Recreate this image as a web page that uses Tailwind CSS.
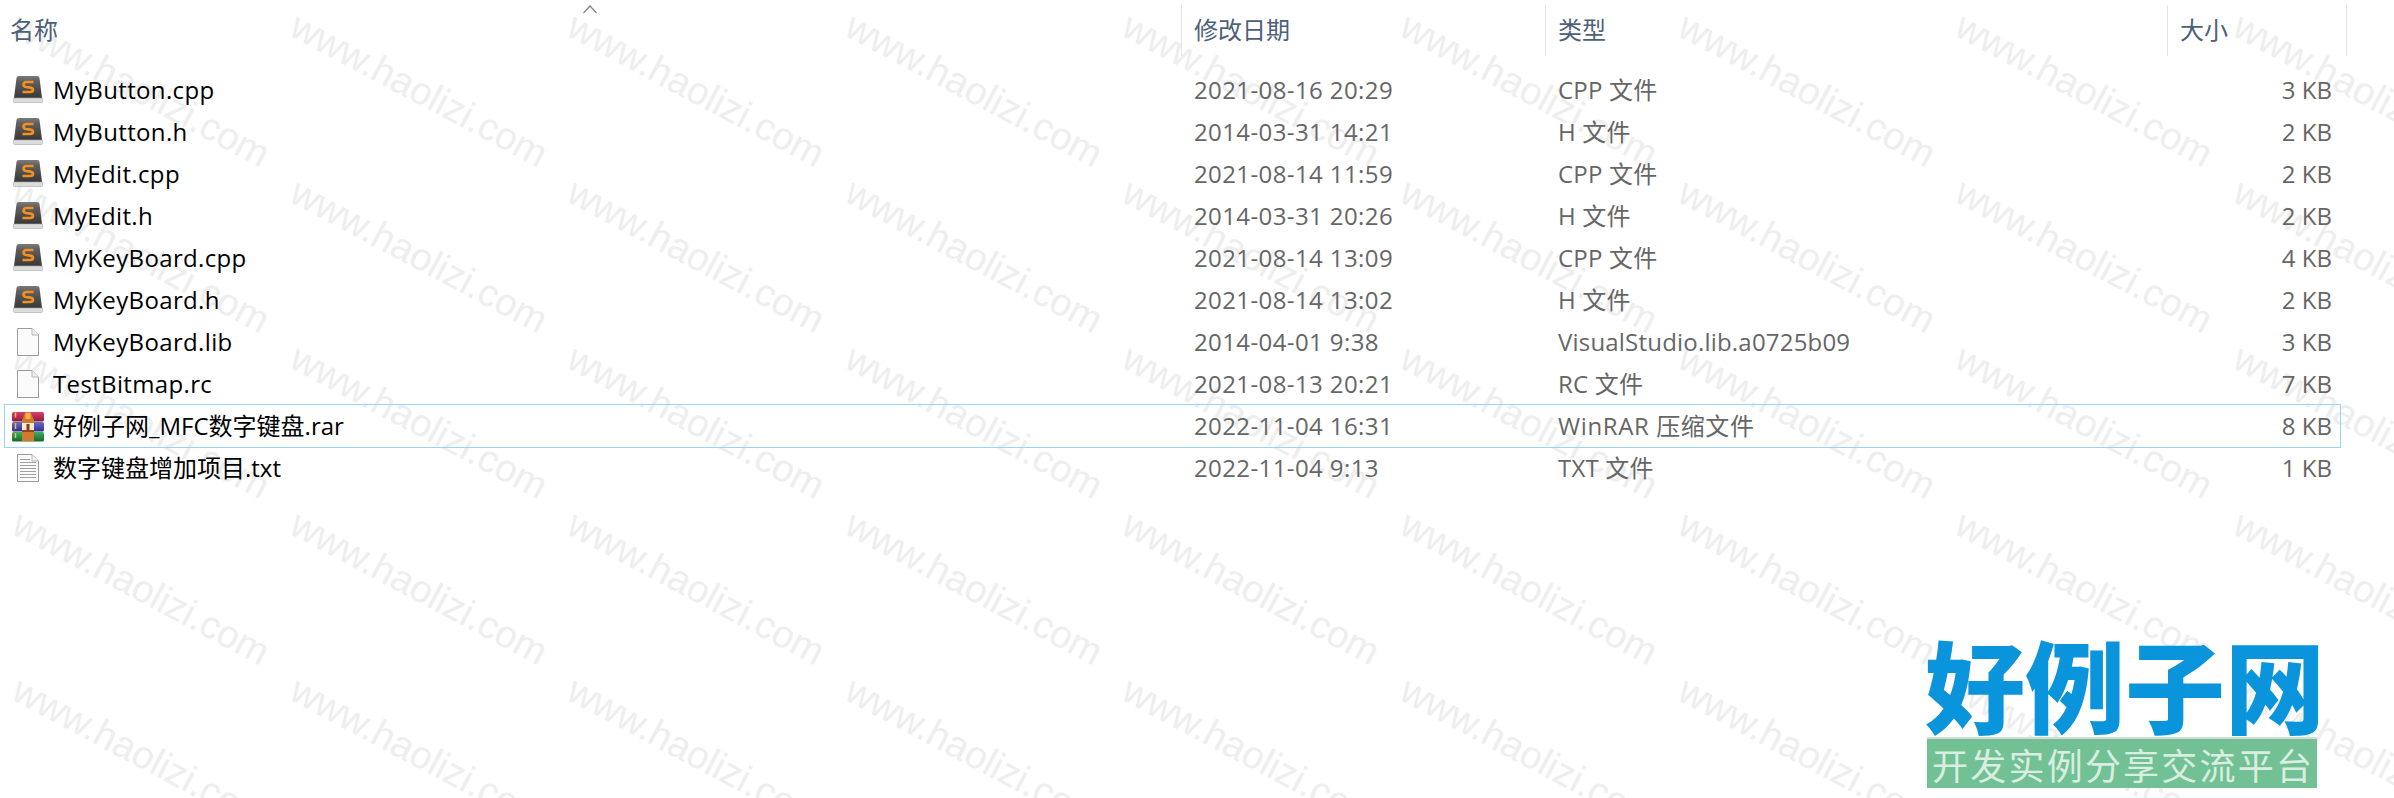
<!DOCTYPE html>
<html lang="zh">
<head>
    <meta charset="UTF-8">
    <title>文件列表</title>
    <script src="https://cdn.jsdelivr.net/npm/@tailwindcss/browser@4"></script>
</head>
<body class="bg-white">
    <svg class="absolute w-0 h-0">
        <defs>
            <linearGradient id="st" x1="0" y1="0" x2="0" y2="1"><stop offset="0" stop-color="#7c7c7c"/><stop offset=".25" stop-color="#5e5e5e"/><stop offset="1" stop-color="#383838"/></linearGradient>
            <linearGradient id="r1" x1="0" y1="0" x2="0" y2="1"><stop offset="0" stop-color="#d8406a"/><stop offset="1" stop-color="#8d1c3c"/></linearGradient>
            <linearGradient id="r2" x1="0" y1="0" x2="0" y2="1"><stop offset="0" stop-color="#6a6cc8"/><stop offset="1" stop-color="#2f2f8c"/></linearGradient>
            <linearGradient id="r3" x1="0" y1="0" x2="0" y2="1"><stop offset="0" stop-color="#3fae62"/><stop offset="1" stop-color="#14692f"/></linearGradient>
            <symbol id="sublime" viewBox="0 0 30 28">
                <path d="M3.5 2Q3.5 0 6 0H24Q26.5 0 26.5 2L29 22H1Z" fill="url(#st)"/>
                <path d="M.5 22H29.5V25.5Q29.5 26.5 28.5 26.5H1.5Q.5 26.5 .5 25.5Z" fill="#dcdcdc" stroke="#a8a8a8" stroke-width=".6"/>
                <path d="M20.5 6H13.5Q10.5 6 10.5 8.5Q10.5 10.5 13 11L17.5 11.6Q20 12 20 14Q20 16 17 16H9.5" fill="none" stroke="#f5901f" stroke-width="2.6"/>
            </symbol>
            <symbol id="blank" viewBox="0 0 22 28">
                <path d="M.5.5H15L21.5 7V27.5H.5Z" fill="#fbfbfb" stroke="#9a9a9a"/>
                <path d="M15 .5V7H21.5" fill="#f0f0f0" stroke="#b5b5b5"/>
            </symbol>
            <symbol id="text" viewBox="0 0 22 28">
                <path d="M.5.5H15L21.5 7V27.5H.5Z" fill="#fbfbfb" stroke="#9a9a9a"/>
                <path d="M15 .5V7H21.5" fill="#f0f0f0" stroke="#b5b5b5"/>
                <path d="M3 5.5H13M3 8.5H19M3 11.5H19M3 14.5H19M3 17.5H19M3 20.5H19M3 23.5H19" stroke="#a0a0a0"/>
            </symbol>
            <symbol id="rar" viewBox="0 0 32 31">
                <rect x="0" y="1" width="32" height="9.5" rx="1.5" fill="url(#r1)"/>
                <rect x="0" y="11" width="32" height="9.5" rx="1.5" fill="url(#r2)"/>
                <rect x="0" y="21" width="32" height="9.5" rx="1.5" fill="url(#r3)"/>
                <path d="M3.5 1.5V6.5M3.5 12V18M3.5 22V27" stroke="#f0c040" stroke-width="1.5"/>
                <path d="M10 9L13.5 1H18.5L22 9V30H10Z" fill="#d17a2c"/>
                <rect x="13.5" y="2" width="5" height="6" fill="#f3b048"/>
                <rect x="10" y="12" width="12" height="7" fill="#f7ead6"/>
                <rect x="14.5" y="13" width="3" height="6" fill="#8a3d12"/>
                <rect x="10" y="19" width="12" height="2" fill="#8a4a1a"/>
            </symbol>
        </defs>
    </svg>

    <div class="relative h-[798px] overflow-hidden font-['Open_Sans','Noto_Sans_CJK_SC',sans-serif]">
        <div id="watermark" class="absolute inset-0"></div>

        <div class="relative">
            <div class="relative flex h-[69px] text-[24px] text-[#4c607a]">
                <div class="w-[1181px] pl-[10px] pt-[15px] leading-[30px]">名称</div>
                <div class="w-[364px] mt-[5px] h-[51px] border-l border-[#e3e5e7] pl-[12px] pt-[10px] leading-[30px]">修改日期</div>
                <div class="w-[622px] mt-[5px] h-[51px] border-l border-[#e3e5e7] pl-[12px] pt-[10px] leading-[30px]">类型</div>
                <div class="w-[180px] mt-[5px] h-[51px] border-x border-[#e3e5e7] pl-[12px] pt-[10px] leading-[30px]">大小</div>
                <svg class="absolute left-[583px] top-[5px] w-[14px] h-[9px]" viewBox="0 0 14 9" fill="none" stroke="#808080" stroke-width="1.2"><path d="M.5 8L7 1L13.5 8"/></svg>
            </div>

            <div id="rows" class="text-[24px] leading-[42px]">
                <div class="flex h-[42px]">
                    <div class="w-[53px] flex items-center pl-[13px]"><svg class="w-[30px] h-[28px]"><use href="#sublime"/></svg></div>
                    <div class="w-[1141px] text-black tracking-[0.35px]">MyButton.cpp</div>
                    <div class="w-[364px] text-[#666] tracking-[0.4px]">2021-08-16 20:29</div>
                    <div class="w-[622px] text-[#666] whitespace-nowrap tracking-[0.2px]">CPP 文件</div>
                    <div class="w-[152px] text-right text-[#666]">3 KB</div>
                </div>
                <div class="flex h-[42px]">
                    <div class="w-[53px] flex items-center pl-[13px]"><svg class="w-[30px] h-[28px]"><use href="#sublime"/></svg></div>
                    <div class="w-[1141px] text-black tracking-[0.35px]">MyButton.h</div>
                    <div class="w-[364px] text-[#666] tracking-[0.4px]">2014-03-31 14:21</div>
                    <div class="w-[622px] text-[#666] whitespace-nowrap tracking-[0.2px]">H 文件</div>
                    <div class="w-[152px] text-right text-[#666]">2 KB</div>
                </div>
                <div class="flex h-[42px]">
                    <div class="w-[53px] flex items-center pl-[13px]"><svg class="w-[30px] h-[28px]"><use href="#sublime"/></svg></div>
                    <div class="w-[1141px] text-black tracking-[0.35px]">MyEdit.cpp</div>
                    <div class="w-[364px] text-[#666] tracking-[0.4px]">2021-08-14 11:59</div>
                    <div class="w-[622px] text-[#666] whitespace-nowrap tracking-[0.2px]">CPP 文件</div>
                    <div class="w-[152px] text-right text-[#666]">2 KB</div>
                </div>
                <div class="flex h-[42px]">
                    <div class="w-[53px] flex items-center pl-[13px]"><svg class="w-[30px] h-[28px]"><use href="#sublime"/></svg></div>
                    <div class="w-[1141px] text-black tracking-[0.35px]">MyEdit.h</div>
                    <div class="w-[364px] text-[#666] tracking-[0.4px]">2014-03-31 20:26</div>
                    <div class="w-[622px] text-[#666] whitespace-nowrap tracking-[0.2px]">H 文件</div>
                    <div class="w-[152px] text-right text-[#666]">2 KB</div>
                </div>
                <div class="flex h-[42px]">
                    <div class="w-[53px] flex items-center pl-[13px]"><svg class="w-[30px] h-[28px]"><use href="#sublime"/></svg></div>
                    <div class="w-[1141px] text-black tracking-[0.35px]">MyKeyBoard.cpp</div>
                    <div class="w-[364px] text-[#666] tracking-[0.4px]">2021-08-14 13:09</div>
                    <div class="w-[622px] text-[#666] whitespace-nowrap tracking-[0.2px]">CPP 文件</div>
                    <div class="w-[152px] text-right text-[#666]">4 KB</div>
                </div>
                <div class="flex h-[42px]">
                    <div class="w-[53px] flex items-center pl-[13px]"><svg class="w-[30px] h-[28px]"><use href="#sublime"/></svg></div>
                    <div class="w-[1141px] text-black tracking-[0.35px]">MyKeyBoard.h</div>
                    <div class="w-[364px] text-[#666] tracking-[0.4px]">2021-08-14 13:02</div>
                    <div class="w-[622px] text-[#666] whitespace-nowrap tracking-[0.2px]">H 文件</div>
                    <div class="w-[152px] text-right text-[#666]">2 KB</div>
                </div>
                <div class="flex h-[42px]">
                    <div class="w-[53px] flex items-center pl-[17px]"><svg class="w-[22px] h-[28px]"><use href="#blank"/></svg></div>
                    <div class="w-[1141px] text-black tracking-[0.35px]">MyKeyBoard.lib</div>
                    <div class="w-[364px] text-[#666] tracking-[0.4px]">2014-04-01 9:38</div>
                    <div class="w-[622px] text-[#666] whitespace-nowrap tracking-[0.2px]">VisualStudio.lib.a0725b09</div>
                    <div class="w-[152px] text-right text-[#666]">3 KB</div>
                </div>
                <div class="flex h-[42px]">
                    <div class="w-[53px] flex items-center pl-[17px]"><svg class="w-[22px] h-[28px]"><use href="#blank"/></svg></div>
                    <div class="w-[1141px] text-black tracking-[0.35px]">TestBitmap.rc</div>
                    <div class="w-[364px] text-[#666] tracking-[0.4px]">2021-08-13 20:21</div>
                    <div class="w-[622px] text-[#666] whitespace-nowrap tracking-[0.2px]">RC 文件</div>
                    <div class="w-[152px] text-right text-[#666]">7 KB</div>
                </div>
                <div class="relative flex h-[42px]">
                    <div class="absolute left-[4px] top-[-1px] w-[2337px] h-[44px] border border-[#99d1ff]"></div>
                    <div class="w-[53px] flex items-center pl-[12px]"><svg class="w-[32px] h-[31px]"><use href="#rar"/></svg></div>
                    <div class="w-[1141px] text-black">好例子网_MFC数字键盘.rar</div>
                    <div class="w-[364px] text-[#666] tracking-[0.4px]">2022-11-04 16:31</div>
                    <div class="w-[622px] text-[#666] whitespace-nowrap tracking-[0.6px]">WinRAR 压缩文件</div>
                    <div class="w-[152px] text-right text-[#666]">8 KB</div>
                </div>
                <div class="flex h-[42px]">
                    <div class="w-[53px] flex items-center pl-[17px]"><svg class="w-[22px] h-[28px]"><use href="#text"/></svg></div>
                    <div class="w-[1141px] text-black">数字键盘增加项目.txt</div>
                    <div class="w-[364px] text-[#666] tracking-[0.4px]">2022-11-04 9:13</div>
                    <div class="w-[622px] text-[#666] whitespace-nowrap tracking-[0.2px]">TXT 文件</div>
                    <div class="w-[152px] text-right text-[#666]">1 KB</div>
                </div>
            </div>
        </div>

        <!-- logo bottom right -->
        <div class="absolute left-[1925px] top-[630px] w-[392px]">
            <div class="flex justify-between h-[105px] text-[100px] leading-[105px] font-black text-[#0a94dc] font-['Noto_Sans_CJK_SC',sans-serif]">
                <span>好</span><span>例</span><span>子</span><span>网</span>
            </div>
            <div class="mt-[2px] ml-[2px] h-[51px] bg-[#72c194] border-t-2 border-[#d2dcd4] flex items-center justify-between px-[5px] text-[36px] leading-[40px] text-[#d9eee0] font-['Noto_Sans_CJK_SC',sans-serif]">
                <span>开</span><span>发</span><span>实</span><span>例</span><span>分</span><span>享</span><span>交</span><span>流</span><span>平</span><span>台</span>
            </div>
        </div>
    </div>

    <script>
        // tiled site watermark
        const wm = document.getElementById('watermark');
        for (let r = 0; r < 5; r++) {
            for (let c = 0; c < 9; c++) {
                const s = document.createElement('span');
                s.className = "absolute whitespace-nowrap text-[38.5px] leading-none text-[#eeeeee] font-['Liberation_Sans',sans-serif]";
                s.textContent = 'www.haolizi.com';
                s.style.left = (141 + c * 277.6) + 'px';
                s.style.top = (90 + r * 166) + 'px';
                s.style.transform = 'translate(-50%,-50%) rotate(28deg)';
                wm.appendChild(s);
            }
        }
    </script>
</body>
</html>
